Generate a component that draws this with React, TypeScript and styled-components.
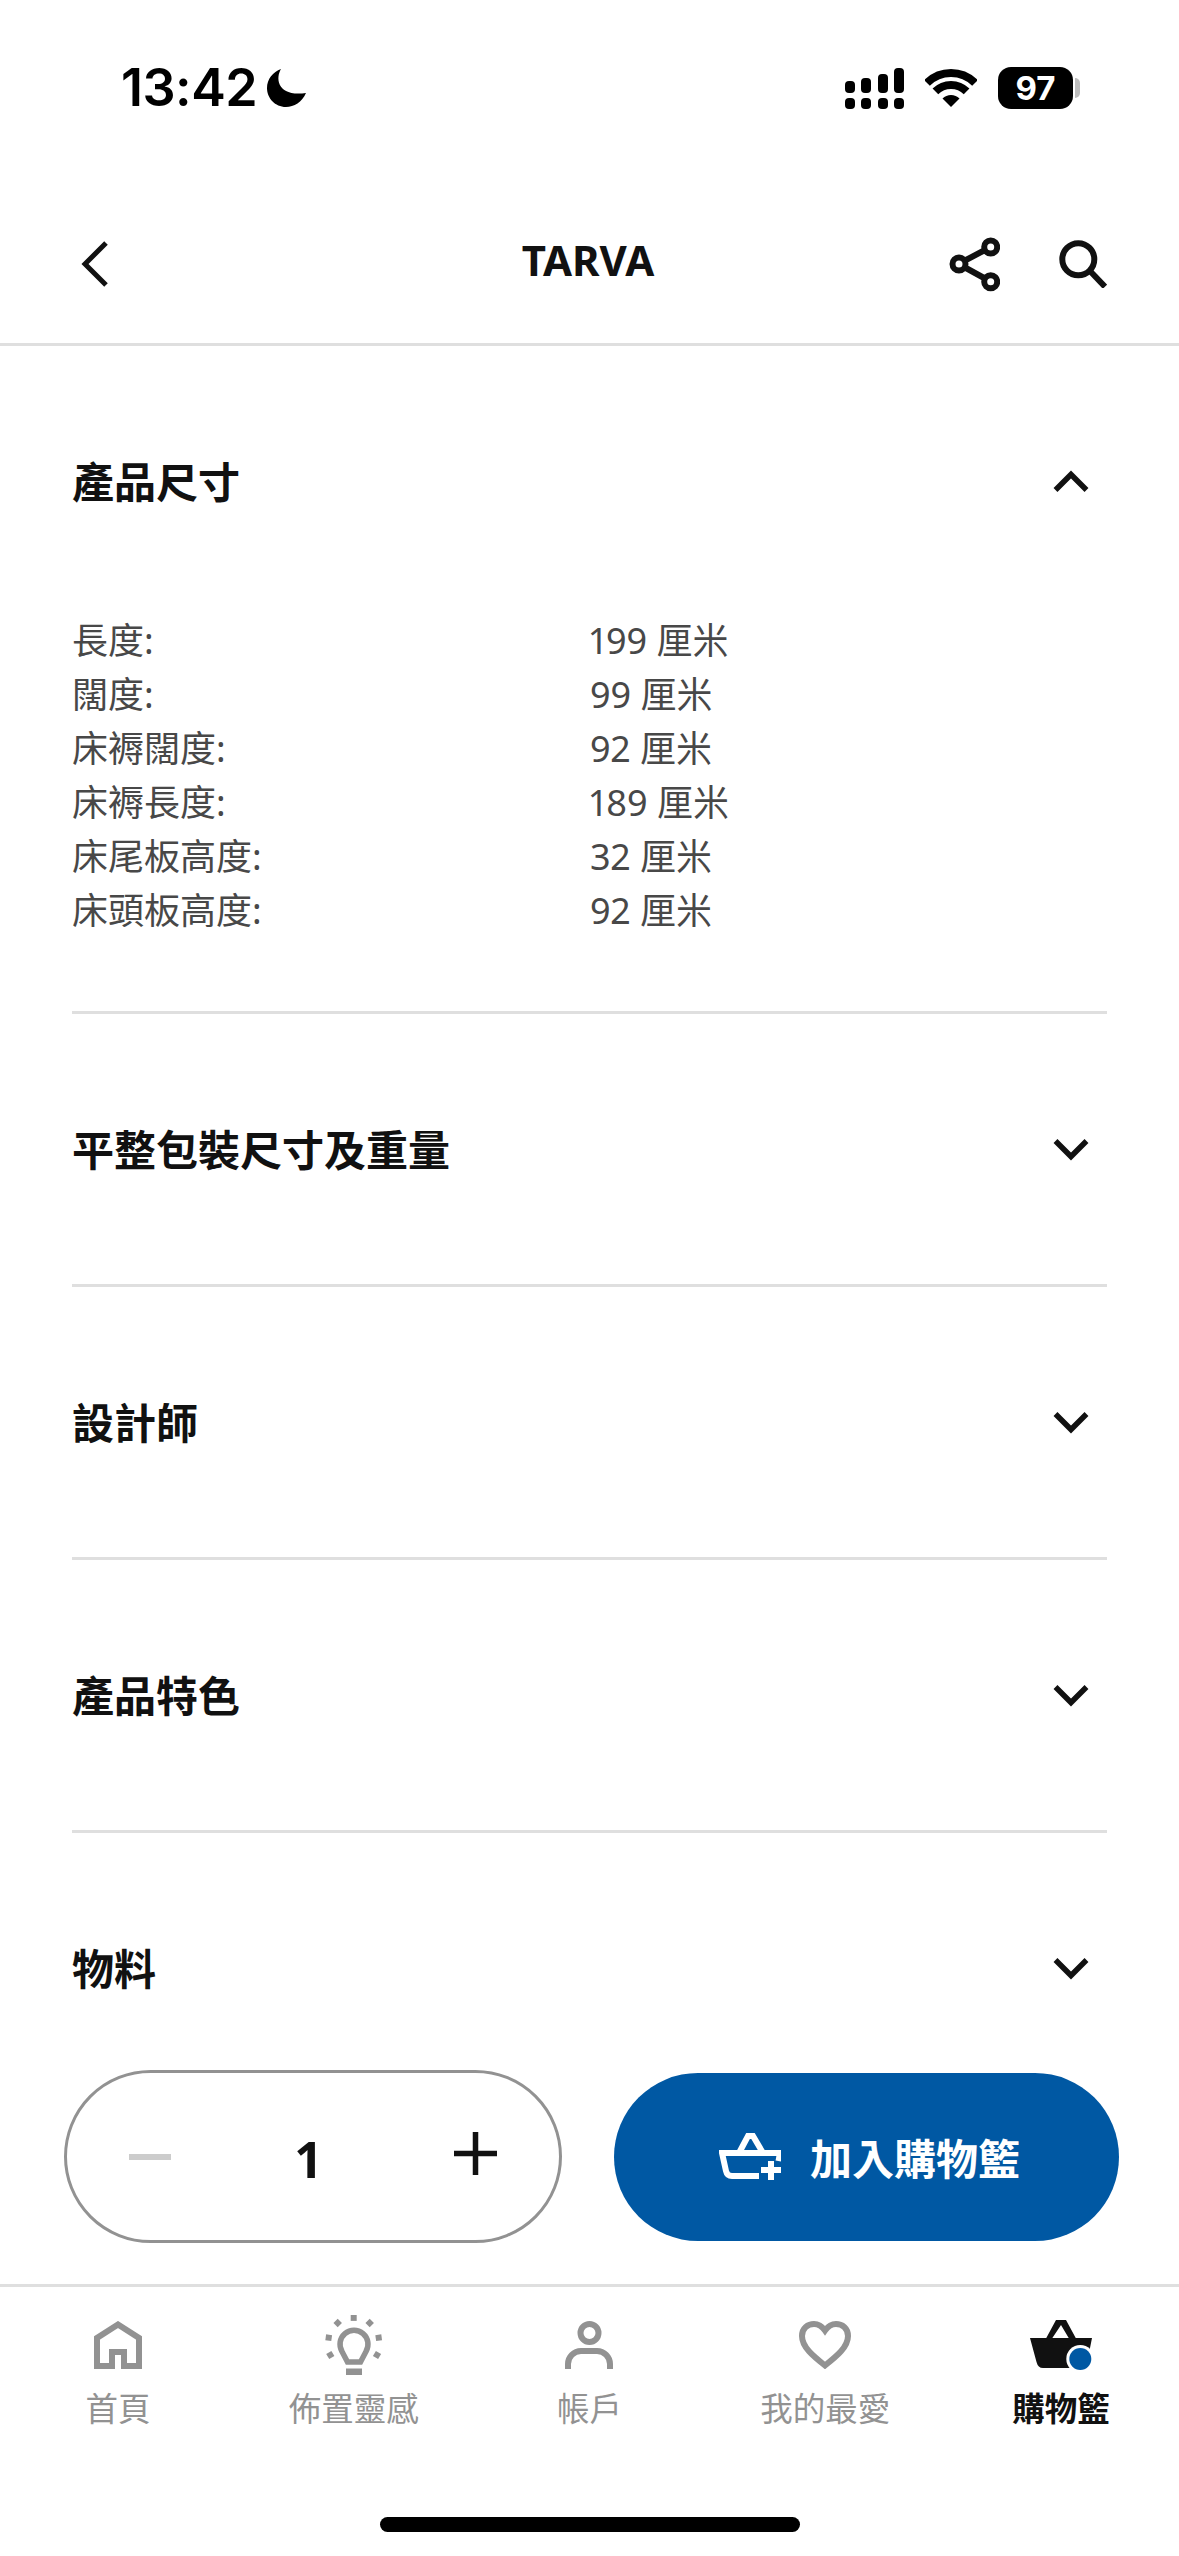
import { createGlobalStyle, styled } from "styled-components";

const GlobalStyle = createGlobalStyle`
  html, body {
    margin: 0;
    padding: 0;
    background: #fff;
  }
  * {
    box-sizing: border-box;
  }
`;

const FONT = `"Noto Sans", "Noto Sans CJK TC", sans-serif`;

const Page = styled.div`
  width: 1179px;
  height: 2556px;
  display: flex;
  flex-direction: column;
  overflow: hidden;
  background: #fff;
  font-family: ${FONT};
  color: #111;
`;

const StatusBar = styled.div`
  height: 176px;
  flex: none;
  display: flex;
  align-items: center;
  justify-content: space-between;
  padding: 0 99px 0 121px;
`;

const TimeGroup = styled.div`
  display: flex;
  align-items: center;
  gap: 10px;
`;

const Time = styled.span`
  font-family: Inter, "Liberation Sans", sans-serif;
  font-size: 52px;
  font-weight: 600;
  line-height: 1;
  letter-spacing: -0.5px;
  color: #000;
`;

const StatusIcons = styled.div`
  display: flex;
  align-items: center;
  gap: 21px;
`;

const Battery = styled.div`
  display: flex;
  align-items: center;
  gap: 2px;
`;

const BatteryBody = styled.div`
  width: 75px;
  height: 42px;
  border-radius: 13px;
  background: #000;
  color: #fff;
  display: flex;
  align-items: center;
  justify-content: center;
  font-family: Inter, "Liberation Sans", sans-serif;
  font-size: 33px;
  font-weight: 700;
`;

const BatteryCap = styled.div`
  width: 5px;
  height: 20px;
  border-radius: 0 5px 5px 0;
  background: #bdbdbd;
`;

const Header = styled.header`
  height: 170px;
  flex: none;
  display: grid;
  grid-template-columns: 1fr auto 1fr;
  align-items: center;
  padding: 0 72px;
  border-bottom: 3px solid #dfdfdf;
`;

const BackIcon = styled.svg`
  display: block;
  margin-left: 9px;
  margin-top: 8px;
`;

const Title = styled.h1`
  margin: 1px 3px 0 0;
  font-size: 42px;
  font-weight: 700;
  line-height: 1.2;
`;

const HeaderActions = styled.div`
  display: flex;
  justify-content: flex-end;
  align-items: center;
  gap: 59px;
  margin-top: 8px;
`;

const Content = styled.main`
  flex: 1;
  min-height: 0;
  overflow: hidden;
  padding: 0 72px;
`;

const Section = styled.section`
  border-bottom: 3px solid #dfdfdf;
`;

const SectionHead = styled.div`
  height: 270px;
  display: flex;
  align-items: center;
  justify-content: space-between;
  padding-right: 18px;
`;

const SectionTitle = styled.h2`
  margin: 3px 0 0;
  font-size: 42px;
  font-weight: 700;
  line-height: 1.2;
`;

const Chevron = styled.svg<{ $open?: boolean }>`
  display: block;
  margin-top: ${(p) => (p.$open ? "0" : "2px")};
  transform: ${(p) => (p.$open ? "none" : "rotate(180deg)")};
`;

const SpecList = styled.dl`
  margin: -5px 0 0;
  padding-bottom: 76px;
`;

const SpecRow = styled.div`
  display: grid;
  grid-template-columns: 518px 1fr;
  height: 54px;
  align-items: center;
  font-size: 36px;
  font-variant-numeric: proportional-nums;
  color: #484848;
`;

const SpecLabel = styled.dt`
  margin: 0;
`;

const SpecValue = styled.dd`
  margin: 0;
`;

const ActionBar = styled.div`
  flex: none;
  display: flex;
  align-items: center;
  justify-content: space-between;
  padding: 0 60px 0 64px;
  margin-bottom: 41px;
`;

const Stepper = styled.div`
  width: 498px;
  height: 173px;
  border: 3px solid #929292;
  border-radius: 87px;
  display: flex;
  align-items: center;
  justify-content: space-between;
  padding: 0 62px;
`;

const StepMinus = styled.span`
  width: 42px;
  height: 6px;
  background: #cccccc;
`;

const StepPlus = styled.svg`
  display: block;
  margin-top: -6px;
`;

const Qty = styled.span`
  font-size: 50px;
  font-weight: 700;
  line-height: 1;
  margin-left: -8px;
  margin-top: 5px;
`;

const AddButton = styled.button`
  width: 505px;
  height: 168px;
  border: 0;
  border-radius: 84px;
  background: #0058a3;
  color: #fff;
  display: flex;
  align-items: center;
  justify-content: center;
  gap: 29px;
  font-family: ${FONT};
  font-size: 42px;
  font-weight: 700;
  padding: 0 0 0 6px;
`;

const TabBar = styled.nav`
  flex: none;
  display: grid;
  grid-template-columns: repeat(5, 1fr);
  border-top: 3px solid #dfdfdf;
  padding-top: 28px;
`;

const Tab = styled.div<{ $active?: boolean }>`
  display: flex;
  flex-direction: column;
  align-items: center;
  gap: 14px;
  font-size: 32.5px;
  line-height: 40px;
  font-weight: ${(p) => (p.$active ? 700 : 400)};
  color: ${(p) => (p.$active ? "#111" : "#929292")};
`;

const TabIcon = styled.div`
  height: 60px;
  display: flex;
  align-items: center;
  justify-content: center;
`;

const HomeArea = styled.div`
  flex: none;
  height: 127px;
  padding-top: 88px;
  display: flex;
  justify-content: center;
`;

const HomeBar = styled.div`
  width: 420px;
  height: 15px;
  border-radius: 8px;
  background: #000;
`;

const SPECS = [
  ["長度:", "199 厘米"],
  ["闊度:", "99 厘米"],
  ["床褥闊度:", "92 厘米"],
  ["床褥長度:", "189 厘米"],
  ["床尾板高度:", "32 厘米"],
  ["床頭板高度:", "92 厘米"],
];

const CLOSED_SECTIONS = ["平整包裝尺寸及重量", "設計師", "產品特色", "物料"];

const ChevronIcon = ({ open }: { open?: boolean }) => (
  <Chevron $open={open} width="36" height="22" viewBox="0 0 36 22" fill="none">
    <path d="M2.500 20 L18 4.500 L33.500 20" stroke="#111" strokeWidth="5.500" />
  </Chevron>
);

const SignalIcon = () => (
  <svg width="59" height="41" viewBox="0 0 59 41" fill="#000">
    <rect x="0" y="13" width="10" height="12" rx="4" />
    <rect x="16" y="10" width="10" height="15" rx="4" />
    <rect x="33" y="6" width="10" height="19" rx="4" />
    <rect x="49" y="0" width="10" height="25" rx="4" />
    <rect x="0" y="30" width="10" height="11" rx="4" />
    <rect x="16" y="30" width="10" height="11" rx="4" />
    <rect x="33" y="30" width="10" height="11" rx="4" />
    <rect x="49" y="30" width="10" height="11" rx="4" />
  </svg>
);

const WifiIcon = () => (
  <svg width="52" height="38" viewBox="0 0 52 38">
    <path d="M2 14 A34 34 0 0 1 50 14" fill="none" stroke="#000" strokeWidth="8" />
    <path d="M10.4 22.4 A22 22 0 0 1 41.6 22.4" fill="none" stroke="#000" strokeWidth="8" />
    <path d="M26 38 L17.5 29.5 A12 12 0 0 1 34.5 29.5 Z" fill="#000" />
  </svg>
);

const MoonIcon = () => (
  <svg width="39" height="38" viewBox="0 0 39 38">
    <path d="M14 0 C8 10 11 28 39 24 C35 33 27 38 19 38 C8 38 0 29 0 19 C0 10 6 3 14 0 Z" fill="#000" />
  </svg>
);

const ShareIcon = () => (
  <svg width="52" height="56" viewBox="0 0 52 56" fill="none" stroke="#111" strokeWidth="6">
    <circle cx="42.7" cy="11" r="6.5" />
    <circle cx="11" cy="28" r="6.5" />
    <circle cx="42.7" cy="45.7" r="6.5" />
    <path d="M17 24.5 L37 14 M17 31.5 L37 42.5" />
  </svg>
);

const SearchIcon = () => (
  <svg width="48" height="48" viewBox="0 0 48 48" fill="none" stroke="#111" strokeWidth="6">
    <circle cx="19.3" cy="19.3" r="16" />
    <path d="M31 31 L46 46.7" />
  </svg>
);

const GREY = "#929292";

const HomeIcon = () => (
  <svg width="48" height="48" viewBox="0 0 48 48" fill="none" stroke={GREY} strokeWidth="6">
    <path d="M18 45 H3 V17 L24 3.5 L45 17 V45 H30 V31 H18 Z" />
  </svg>
);

const RAYS = [
  [28.7, 2.9, 0],
  [12.7, 8, 45],
  [44.7, 8, 45],
  [3.7, 22.7, 8],
  [53.7, 22.7, -8],
  [5.3, 40, 60],
  [52, 40, 30],
];

const BulbIcon = () => (
  <svg width="58" height="60" viewBox="0 0 58 60">
    {RAYS.map(([x, y, r]) => (
      <rect key={`${x}-${y}`} x={x - 3} y={y - 3} width="6" height="6" fill={GREY} transform={`rotate(${r} ${x} ${y})`} />
    ))}
    <path d="M22.5 47 H35.5 L41 36.5 A14 14 0 1 0 17 36.5 Z" fill="none" stroke={GREY} strokeWidth="5.5" />
    <rect x="21" y="53.5" width="16" height="6.5" fill={GREY} />
  </svg>
);

const PersonIcon = () => (
  <svg width="48" height="48" viewBox="0 0 48 48" fill="none" stroke={GREY} strokeWidth="6">
    <circle cx="24.5" cy="12" r="9" />
    <path d="M3 48 V43 A13 13 0 0 1 16 30 H32 A13 13 0 0 1 45 43 V48" />
  </svg>
);

const HeartIcon = () => (
  <svg width="52" height="48" viewBox="0 0 52 48" fill="none" stroke={GREY} strokeWidth="6">
    <path d="M26 44.5 C14 35 3 26 3 15 C3 7 9 3 15 3 C20 3 23.5 6 26 9.5 C28.5 6 32 3 37 3 C43 3 49 7 49 15 C49 26 38 35 26 44.5 Z" />
  </svg>
);

const CartActiveIcon = () => (
  <svg width="62" height="51" viewBox="0 0 62 51">
    <path
      fillRule="evenodd"
      d="M16 18.5 L26 0 H36 L46 18.5 Z M22 18.5 H39 L31 5 Z"
      fill="#111"
    />
    <path d="M0 18 H62 L56 48 H13 Q8 48 6.500 42 Z" fill="#111" />
    <circle cx="50.300" cy="39" r="14" fill="#fff" />
    <circle cx="50.300" cy="39" r="11" fill="#0058a3" />
  </svg>
);

const CartAddIcon = () => (
  <svg width="62" height="47" viewBox="0 0 62 47" fill="none" stroke="#fff" strokeWidth="6">
    <path d="M20 20 L29 3 H34 L44 20" />
    <path d="M40 43 H13 Q8 43 7 38 L3 20 H61 L59.500 28" />
    <path d="M52 28 V47 M42 37 H62" />
  </svg>
);

const TABS = [
  { label: "首頁", icon: <HomeIcon /> },
  { label: "佈置靈感", icon: <BulbIcon /> },
  { label: "帳戶", icon: <PersonIcon /> },
  { label: "我的最愛", icon: <HeartIcon /> },
  { label: "購物籃", icon: <CartActiveIcon />, active: true },
];

const App = () => {
  return (
    <Page>
      <GlobalStyle />
      <StatusBar>
        <TimeGroup>
          <Time>13:42</Time>
          <MoonIcon />
        </TimeGroup>
        <StatusIcons>
          <SignalIcon />
          <WifiIcon />
          <Battery>
            <BatteryBody>97</BatteryBody>
            <BatteryCap />
          </Battery>
        </StatusIcons>
      </StatusBar>

      <Header>
        <BackIcon width="28" height="48" viewBox="0 0 28 48" fill="none">
          <path d="M25 3 L4 24 L25 45" stroke="#111" strokeWidth="5" />
        </BackIcon>
        <Title>TARVA</Title>
        <HeaderActions>
          <ShareIcon />
          <SearchIcon />
        </HeaderActions>
      </Header>

      <Content>
        <Section>
          <SectionHead>
            <SectionTitle>產品尺寸</SectionTitle>
            <ChevronIcon open />
          </SectionHead>
          <SpecList>
            {SPECS.map(([label, value]) => (
              <SpecRow key={label}>
                <SpecLabel>{label}</SpecLabel>
                <SpecValue>{value}</SpecValue>
              </SpecRow>
            ))}
          </SpecList>
        </Section>
        {CLOSED_SECTIONS.map((name) => (
          <Section key={name}>
            <SectionHead>
              <SectionTitle>{name}</SectionTitle>
              <ChevronIcon />
            </SectionHead>
          </Section>
        ))}
      </Content>

      <ActionBar>
        <Stepper>
          <StepMinus />
          <Qty>1</Qty>
          <StepPlus width="43" height="43" viewBox="0 0 43 43">
            <path d="M21.500 0 V43 M0 21.500 H43" stroke="#111" strokeWidth="5.500" />
          </StepPlus>
        </Stepper>
        <AddButton>
          <CartAddIcon />
          加入購物籃
        </AddButton>
      </ActionBar>

      <TabBar>
        {TABS.map((tab) => (
          <Tab key={tab.label} $active={tab.active}>
            <TabIcon>{tab.icon}</TabIcon>
            {tab.label}
          </Tab>
        ))}
      </TabBar>
      <HomeArea>
        <HomeBar />
      </HomeArea>
    </Page>
  );
};

export default App;
